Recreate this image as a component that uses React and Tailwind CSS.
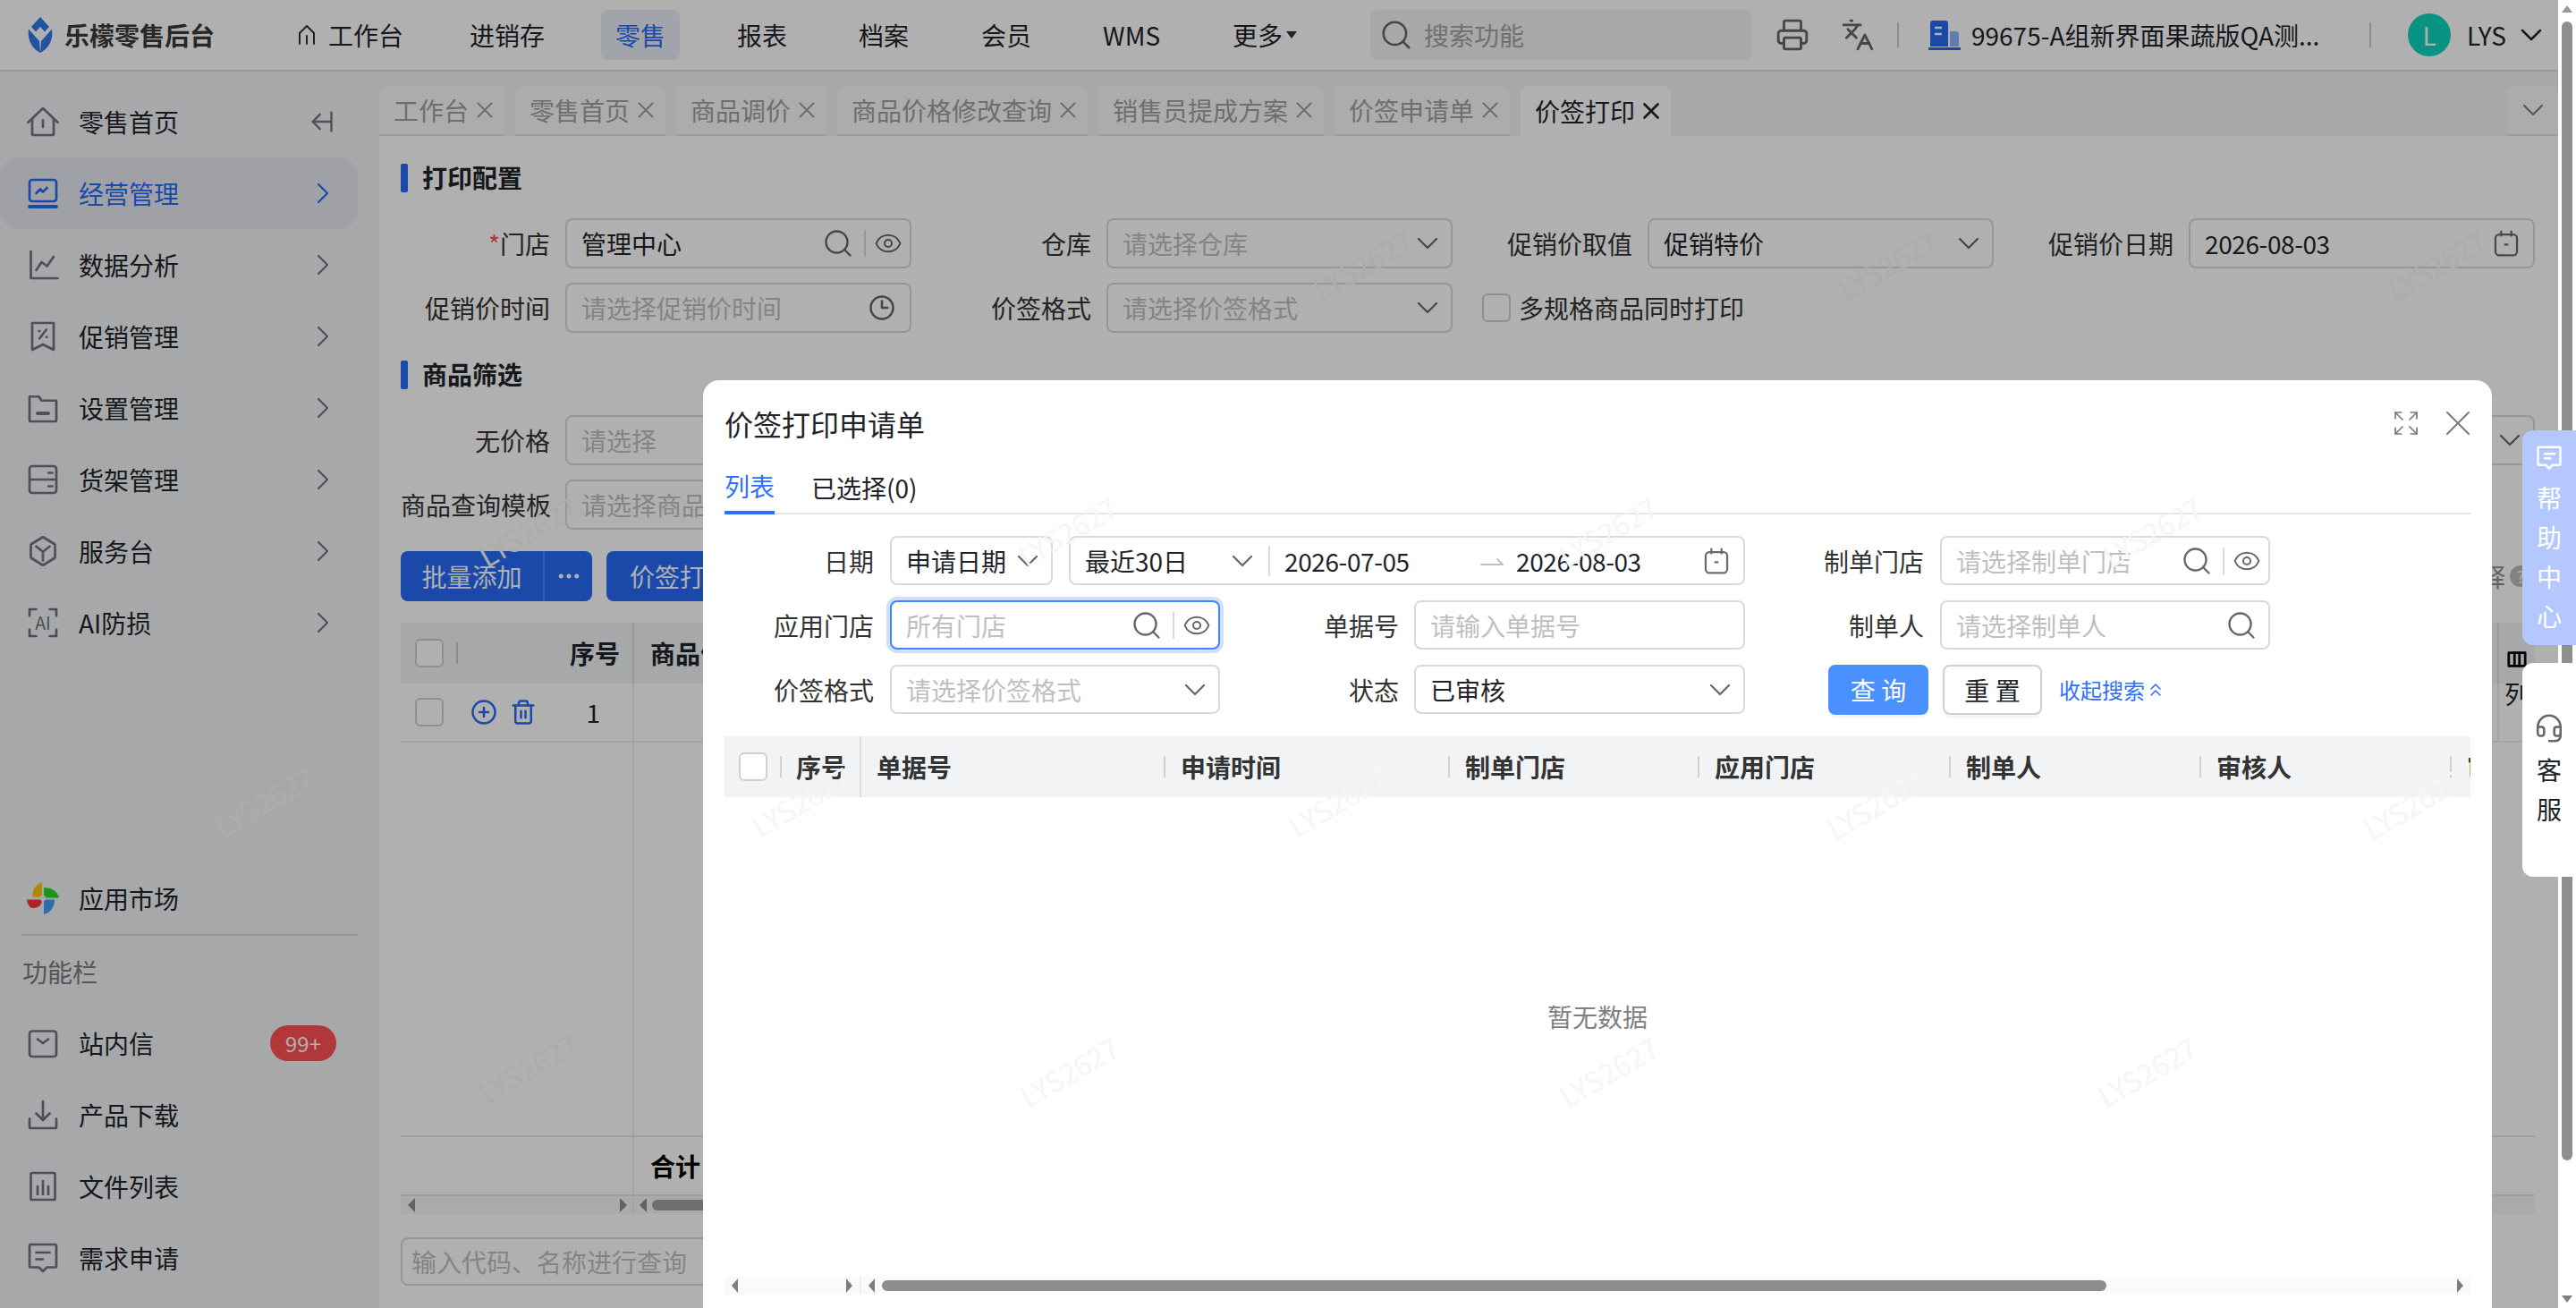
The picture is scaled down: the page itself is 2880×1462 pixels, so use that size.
import React from 'react';
import { Search, Eye, ChevronDown, ChevronRight, ChevronsUp, Printer, Languages, X, Expand, CirclePlus, Trash2, Headset, Ellipsis } from 'lucide-react';

const Svg = ({ className, sw = 2, children, box = '0 0 24 24' }) => (
    <svg viewBox={box} fill="none" stroke="currentColor" strokeWidth={sw} strokeLinecap="round" strokeLinejoin="round" className={className}>
        {children}
    </svg>
);

const Calendar = () => (
    <Svg className="w-[34px] h-[34px] text-[#6b6b6b]" sw={1.6}>
        <rect x="3.500" y="5" width="17" height="16.500" rx="3" />
        <path d="M8 2.500V6M16 2.500V6M11 13h2" />
    </Svg>
);

const menuIcons = {
    home: <><path d="M1 12.5 12 2l11 10.5" /><path d="M4 10v11a1 1 0 0 0 1 1h14a1 1 0 0 0 1-1V10" /><path d="M12 11v5" /></>,
    board: <><rect x="2" y="2" width="20" height="16" rx="2" /><path d="M7 12l3-3 2 2 3-3" /><path d="M2 22h20" strokeWidth="2.6" /></>,
    chart: <><path d="M3 2v20h20" /><path d="M7 16l4-6 4 3 5-7" /></>,
    promo: <><path d="M4 2h16v20l-8-4-8 4z" /><path d="M9.5 13.5 14.5 7M9 8h.5M14.5 12.5h.5" /></>,
    folder: <><path d="M2 3.5h7l2 3h11V21a1 1 0 0 1-1 1H3a1 1 0 0 1-1-1z" /><path d="M8 16h8" strokeWidth="2.6" /></>,
    shelf: <><rect x="2" y="2" width="20" height="20" rx="2" /><path d="M2 12h20M16 7h3M16 17h3" /></>,
    desk: <><path d="M12 1.5 21 7v10l-9 5.5L3 17V7z" /><path d="m7 8.5 5 4 5-4M12 12.5V19" /></>,
    ai: <><path d="M7 2H2v5M17 2h5v5M7 22H2v-5M17 22h5v-5" /><text x="12" y="17" textAnchor="middle" fontSize="13" stroke="none" fill="currentColor">AI</text></>,
    mail: <><rect x="2" y="3" width="20" height="19" rx="2" /><path d="m8 9 4 3 4-3" /></>,
    down: <><path d="M12 2v14M7 11l5 5 5-5" /><path d="M2 15v6a1 1 0 0 0 1 1h18a1 1 0 0 0 1-1v-6" /></>,
    file: <><rect x="3" y="2" width="18" height="20" rx="1" /><path d="M8 12v6M12 8v10M16 12v6" /></>,
    note: <><path d="M2 3a1 1 0 0 1 1-1h18a1 1 0 0 1 1 1v15a1 1 0 0 1-1 1h-6l-3 3-3-3H3a1 1 0 0 1-1-1z" /><path d="M7 8h10M7 13h5" /></>,
};

const Pinwheel = () => (
    <svg viewBox="0 0 34 34" className="w-[36px] h-[36px]">
        <path d="M16 0C10 2 6 7 6 15.500h10z" fill="#ffc400" />
        <path d="M18 6C25 5 33 10 34 16.500H18z" fill="#26d926" />
        <path d="M0 18.500h16C16 27 8 28 4 27 2 25 0 22 0 18.500z" fill="#ff3535" />
        <path d="M18 18.500h11C30 26 25 32 18 34z" fill="#3da0ff" />
        <circle cx="17" cy="17" r="3" fill="#f2f3f5" />
    </svg>
);

const MenuItem = ({ icon, label, active, arrow = true, extra }) => (
    <div className={`flex items-center w-[400px] h-[80px] pl-[30px] pr-[30px] rounded-[22px] ${active ? 'bg-[#e6e9f2] text-[#266bf6]' : 'text-[#1f2329]'}`}>
        <span className={active ? 'text-[#266bf6]' : 'text-[#71747f]'}>
            {icon === 'app' ? <Pinwheel /> : <Svg className="w-[36px] h-[36px]" sw={1.8}>{menuIcons[icon]}</Svg>}
        </span>
        <span className="ml-[22px] text-[28px]">{label}</span>
        {extra}
        {arrow && <ChevronRight className={`ml-auto w-[40px] h-[40px] -mr-[11px] ${active ? 'text-[#266bf6]' : 'text-[#71747f]'}`} strokeWidth={1.3} />}
    </div>
);

const Sidebar = () => (
    <div className="flex flex-col w-[424px] h-full bg-[#f2f3f5] pt-[16px] pb-[16px]">
        <MenuItem
            icon="home"
            label="零售首页"
            arrow={false}
            extra={
                <Svg className="ml-auto -mr-[4px] w-[28px] h-[28px] text-[#71747f]" sw={2}>
                    <path d="M21 3v18M20 12H3M10 5l-7 7 7 7" />
                </Svg>
            }
        />
        <MenuItem icon="board" label="经营管理" active />
        <MenuItem icon="chart" label="数据分析" />
        <MenuItem icon="promo" label="促销管理" />
        <MenuItem icon="folder" label="设置管理" />
        <MenuItem icon="shelf" label="货架管理" />
        <MenuItem icon="desk" label="服务台" />
        <MenuItem icon="ai" label="AI防损" />

        <div className="mt-auto">
            <MenuItem icon="app" label="应用市场" arrow={false} />
        </div>
        <div className="ml-[24px] w-[376px] h-[2px] bg-[#dcdde0]" />
        <div className="flex items-center h-[80px] pl-[25px] text-[28px] text-[#7c7c7c]">功能栏</div>
        <MenuItem
            icon="mail"
            label="站内信"
            arrow={false}
            extra={<span className="ml-auto -mr-[6px] flex items-center justify-center w-[74px] h-[40px] rounded-full bg-[#ff5151] text-white text-[24px]">99+</span>}
        />
        <MenuItem icon="down" label="产品下载" arrow={false} />
        <MenuItem icon="file" label="文件列表" arrow={false} />
        <MenuItem icon="note" label="需求申请" arrow={false} />
    </div>
);

const Header = () => (
    <div className="flex items-center h-[80px] border-b-2 border-[#dedede] bg-white text-[28px] text-[#1f2329]">
        <svg viewBox="0 0 30 40" className="ml-[30px] w-[30px] h-[40px]" fill="#2f7aea">
            <path d="M15 0 25 11l-5 5.500-5-5.500-5 5.500L5 11z" />
            <path d="M2 13.500 14 27l1 13C7 36 0 27 2 13.500z" />
            <path d="M28 13.500 16 27l-1 13c8-4 15-13 13-26.500z" />
        </svg>
        <span className="ml-[12px] w-[168px] font-bold whitespace-nowrap text-[#3a3a3a]">乐檬零售后台</span>
        <div className="flex items-center ml-[91px]">
            <Svg className="w-[24px] h-[24px] text-[#333]" sw={2}>
                <path d="M4 22V10l8-8 8 8v12M12 13v9" />
            </Svg>
            <span className="ml-[12px] mr-[74px]">工作台</span>
            <span className="mr-[63px]">进销存</span>
            <span className="flex items-center justify-center w-[88px] h-[56px] rounded-[8px] bg-[#ebeefa] text-[#266bf6] mr-[64px]">零售</span>
            <span className="mr-[80px]">报表</span>
            <span className="mr-[81px]">档案</span>
            <span className="mr-[80px]">会员</span>
            <span className="mr-[81px]">WMS</span>
            <span>更多</span>
            <span className="ml-[4px] w-0 h-0 border-x-[6px] border-x-transparent border-t-[8px] border-t-[#333]" />
        </div>
        <div className="ml-auto flex items-center pr-[10px]">
            <div className="flex items-center w-[427px] h-[56px] rounded-[8px] bg-[#f2f3f5] pl-[10px]">
                <Search className="w-[38px] h-[38px] text-[#666]" strokeWidth={1.6} />
                <span className="ml-[12px] text-[#a3a3a3]">搜索功能</span>
            </div>
            <Printer className="ml-[26px] w-[38px] h-[38px] text-[#666]" strokeWidth={1.8} />
            <Languages className="ml-[35px] w-[38px] h-[38px] text-[#666]" strokeWidth={1.8} />
            <div className="ml-[25px] w-[2px] h-[28px] bg-[#cfcfcf]" />
            <svg viewBox="0 0 36 36" className="ml-[33px] w-[36px] h-[36px]">
                <path d="M2 5a3 3 0 0 1 3-3h14a3 3 0 0 1 3 3v26H2z" fill="#266bf6" />
                <path d="M24 14h7a3 3 0 0 1 3 3v14H24z" fill="#8fb2ff" />
                <path d="M0 32h36v3H0z" fill="#266bf6" />
                <path d="M7 10h8M7 17h8" stroke="#fff" strokeWidth="2.400" />
            </svg>
            <span className="ml-[12px] w-[390px] whitespace-nowrap">99675-A组新界面果蔬版QA测...</span>
            <div className="ml-[55px] w-[2px] h-[28px] bg-[#cfcfcf]" />
            <div className="ml-[41px] flex items-center justify-center w-[48px] h-[48px] rounded-full bg-[#0ed6bd] text-white text-[28px]">L</div>
            <span className="ml-[18px] w-[42px]">LYS</span>
            <ChevronDown className="ml-[10px] w-[40px] h-[40px] text-[#1f2329]" strokeWidth={1.5} />
        </div>
    </div>
);

const tabs = ['工作台', '零售首页', '商品调价', '商品价格修改查询', '销售员提成方案', '价签申请单'];

const TabStrip = () => (
    <div className="flex items-end gap-[12px] h-[72px] bg-[#f2f3f5] text-[28px]">
        {tabs.map((t, i) => (
            <div key={i} className="flex items-center h-[56px] pl-[16px] pr-[15px] rounded-t-[8px] bg-[#fafafa] border-b-2 border-[#e2e2e2] text-[#a0a0a0]">
                <span className="whitespace-nowrap">{t}</span>
                <X className="ml-[3px] w-[30px] h-[30px] -mr-[8px]" strokeWidth={1.7} />
            </div>
        ))}
        <div className="flex items-center h-[56px] pl-[16px] pr-[15px] rounded-t-[8px] bg-white text-[#1f2329]">
            <span className="whitespace-nowrap">价签打印</span>
            <X className="ml-[3px] w-[30px] h-[30px] -mr-[8px]" strokeWidth={2.2} />
        </div>
        <div className="ml-auto flex items-center justify-center w-[57px] h-[56px] rounded-t-[8px] bg-[#fafafa] border-b-2 border-[#e2e2e2] text-[#808080]">
            <ChevronDown className="w-[40px] h-[40px]" strokeWidth={1.3} />
        </div>
    </div>
);

const SectionTitle = ({ children, className }) => (
    <div className={`flex items-center h-[32px] ${className}`}>
        <span className="w-[8px] h-[32px] rounded-[2px] bg-[#266bf6]" />
        <span className="ml-[16px] -mt-[2px] text-[28px] font-bold text-[#1f2329]">{children}</span>
    </div>
);

const Input = ({ className = '', placeholder, value, focused, children }) => (
    <div className={`flex items-center rounded-[8px] border-2 bg-white text-[28px] pl-[16px] ${focused ? 'border-[#3f86ff] ring-4 ring-[#cfdfff]' : 'border-[#d9d9d9]'} ${className}`}>
        <span className={`flex-1 whitespace-nowrap overflow-hidden ${value ? 'text-[#1f2329]' : 'text-[#bfbfbf]'}`}>{value || placeholder}</span>
        {children}
    </div>
);

const Caret = () => <ChevronDown className="mr-[6px] w-[40px] h-[40px] text-[#666]" strokeWidth={1.3} />;

const SearchEye = () => (
    <>
        <Search className="-mr-[3px] w-[36px] h-[36px] text-[#666]" strokeWidth={1.6} />
        <span className="ml-[14px] w-[2px] h-[30px] bg-[#d9d9d9]" />
        <Eye className="ml-[9px] mr-[8px] w-[32px] h-[32px] text-[#666]" strokeWidth={1.5} />
    </>
);

const PageField = ({ label, star, children }) => (
    <div className="flex items-center gap-[17px] h-[56px] text-[28px] text-[#333]">
        <span className="w-[167px] text-right whitespace-nowrap">
            {star && <span className="text-[#ff4d4f]">*</span>}
            {label}
        </span>
        {children}
    </div>
);

const Checkbox = () => <span className="block w-[32px] h-[32px] rounded-[6px] border-2 border-[#d0d0d0] bg-white shrink-0" />;

const Content = () => (
    <div className="flex-1 min-h-0 bg-white pl-[24px] pr-[26px]">
        <SectionTitle className="mt-[31px]">打印配置</SectionTitle>
        <div className="grid grid-cols-4 gap-x-[34px] gap-y-[16px] w-[2386px] mt-[29px]">
            <PageField label="门店" star>
                <Input className="flex-1 h-[56px]" value="管理中心"><SearchEye /></Input>
            </PageField>
            <PageField label="仓库">
                <Input className="flex-1 h-[56px]" placeholder="请选择仓库"><Caret /></Input>
            </PageField>
            <PageField label="促销价取值">
                <Input className="flex-1 h-[56px]" value="促销特价"><Caret /></Input>
            </PageField>
            <PageField label="促销价日期">
                <Input className="flex-1 h-[56px] tracking-[-0.4px]" value="2026-08-03"><span className="mr-[13px]"><Calendar /></span></Input>
            </PageField>
            <PageField label="促销价时间">
                <Input className="flex-1 h-[56px]" placeholder="请选择促销价时间">
                    <Svg className="mr-[16px] w-[30px] h-[30px] text-[#666]"><circle cx="12" cy="12" r="10" /><path d="M12 6v6h5" /></Svg>
                </Input>
            </PageField>
            <PageField label="价签格式">
                <Input className="flex-1 h-[56px]" placeholder="请选择价签格式"><Caret /></Input>
            </PageField>
            <div className="flex items-center h-[56px] text-[28px] text-[#333] col-span-2 -ml-[1px]">
                <Checkbox />
                <span className="ml-[9px]">多规格商品同时打印</span>
            </div>
        </div>
        <SectionTitle className="mt-[31px]">商品筛选</SectionTitle>
        <div className="grid grid-cols-4 gap-x-[34px] gap-y-[16px] w-[2386px] mt-[29px]">
            <PageField label="无价格">
                <Input className="flex-1 h-[56px]" placeholder="请选择"><Caret /></Input>
            </PageField>
            <div className="col-span-2" />
            <PageField label="商品类别">
                <Input className="flex-1 h-[56px]" placeholder="请选择"><Caret /></Input>
            </PageField>
            <PageField label="商品查询模板">
                <Input className="flex-1 h-[56px]" placeholder="请选择商品查询模板"><Caret /></Input>
            </PageField>
        </div>
        <div className="flex items-center h-[56px] mt-[24px] text-[28px] text-white">
            <div className="flex items-center h-[56px] rounded-[8px] bg-[#266bf6]">
                <span className="w-[159px] text-center">批量添加</span>
                <span className="w-[2px] h-[56px] bg-[#4a84f7]" />
                <span className="flex items-center justify-center w-[53px]"><Ellipsis className="w-[30px] h-[30px]" strokeWidth={2} /></span>
            </div>
            <div className="flex items-center h-[56px] ml-[16px] pl-[26px] pr-[26px] rounded-[8px] bg-[#266bf6]">价签打印</div>
            <span className="ml-auto text-[#8c8c8c]">解释</span>
            <span className="ml-[5px] mr-[4px] flex items-center justify-center w-[24px] h-[24px] rounded-full bg-[#bdbdbd] text-[18px] text-white">?</span>
        </div>
        <div className="mt-[24px] flex flex-col h-[661px] text-[28px] text-[#1f2329]">
            <div className="flex h-[68px] bg-[#f2f3f5] font-bold">
                <div className="flex items-center w-[261px] border-r-2 border-[#dcdcdc]">
                    <span className="ml-[16px]"><Checkbox /></span>
                    <span className="ml-[14px] w-[2px] h-[24px] bg-[#c9c9c9]" />
                    <span className="ml-auto mr-[14px]">序号</span>
                </div>
                <div className="flex-1 flex items-center pl-[18px]">商品信息</div>
                <div className="flex items-center justify-center w-[42px] pt-[14px] border-l-2 border-[#dcdcdc]">
                    <Svg className="w-[22px] h-[22px] text-black" sw={3}><rect x="2" y="4" width="20" height="16" /><path d="M9 4v16M15 4v16" /></Svg>
                </div>
            </div>
            <div className="flex h-[66px] border-b-2 border-[#eeeeee]">
                <div className="flex items-center w-[261px] border-r-2 border-[#eeeeee]">
                    <span className="ml-[16px]"><Checkbox /></span>
                    <CirclePlus className="ml-[30px] w-[30px] h-[30px] text-[#266bf6]" strokeWidth={2} />
                    <Trash2 className="ml-[14px] w-[30px] h-[30px] text-[#266bf6]" strokeWidth={2} />
                    <span className="ml-auto mr-[36px]">1</span>
                </div>
                <div className="flex-1" />
                <div className="w-[42px] border-l-2 border-[#eeeeee] pl-[6px] leading-[22px]">列</div>
            </div>
            <div className="flex-1 flex">
                <span className="w-[261px] border-r-2 border-[#eeeeee]" />
            </div>
            <div className="flex h-[68px] border-y-2 border-[#e6e6e6] font-bold text-black">
                <span className="w-[261px] border-r-2 border-[#eeeeee]" />
                <span className="flex items-center pl-[18px]">合计</span>
            </div>
            <div className="flex items-center h-[20px] bg-[#f7f7f7]">
                <div className="flex items-center w-[261px] h-[20px] border-r-2 border-[#eeeeee] pl-[8px] pr-[6px]">
                    <span className="w-0 h-0 border-y-[8px] border-y-transparent border-r-[8px] border-r-[#8f8f8f]" />
                    <span className="ml-auto w-0 h-0 border-y-[8px] border-y-transparent border-l-[8px] border-l-[#8f8f8f]" />
                </div>
                <span className="ml-[6px] w-0 h-0 border-y-[8px] border-y-transparent border-r-[8px] border-r-[#8f8f8f]" />
                <span className="ml-[6px] w-[1000px] h-[12px] rounded-full bg-[#a0a0a0]" />
            </div>
        </div>
        <div className="flex items-center mt-[26px] w-[700px] h-[54px] rounded-[8px] border-2 border-[#d9d9d9] pl-[10px] text-[28px] text-[#bfbfbf]">输入代码、名称进行查询</div>
    </div>
);

const DialogField = ({ label, children, className = '' }) => (
    <div className={`flex items-center h-[55px] text-[28px] text-[#333] ${className}`}>
        <span className="shrink-0 text-right whitespace-nowrap w-[167px]">{label}</span>
        {children}
    </div>
);

const DialogFieldWide = ({ label, children }) => (
    <div className="flex items-center h-[55px] text-[28px] text-[#333]">
        <span className="shrink-0 text-right whitespace-nowrap w-[183px]">{label}</span>
        {children}
    </div>
);

const columns = [
    { label: '单据号', w: 'w-[340px]' },
    { label: '申请时间', w: 'w-[318px]' },
    { label: '制单门店', w: 'w-[279px]' },
    { label: '应用门店', w: 'w-[281px]' },
    { label: '制单人', w: 'w-[280px]' },
    { label: '审核人', w: 'w-[280px]' },
    { label: '审核时间', w: 'w-[21px]' },
];

const Dialog = () => (
    <div className="absolute left-[786px] top-[425px] flex flex-col w-[2000px] h-[1060px] rounded-[18px] bg-white px-[24px] text-[#1f2329]">
        <div className="flex items-center h-[96px] shrink-0">
            <span className="text-[32px]">价签打印申请单</span>
            <Expand className="ml-auto w-[32px] h-[32px] text-[#7a7a7a]" strokeWidth={1.3} />
            <X className="ml-[18px] -mr-[10px] w-[48px] h-[48px] text-[#7a7a7a]" strokeWidth={1} />
        </div>
        <div className="flex h-[54px] shrink-0 border-b-2 border-[#e6e6e6] text-[28px]">
            <span className="flex items-center h-[54px] pb-[6px] text-[#2f6fff] border-b-4 border-[#2f6fff]">列表</span>
            <span className="flex items-center ml-[41px] h-[52px] pb-[4px]">已选择(0)</span>
        </div>

        <div className="grid grid-cols-[554px_570px_570px] gap-x-[17px] gap-y-[17px] mt-[24px] shrink-0">
            <DialogField label="日期" className="col-span-2">
                <Input className="ml-[18px] w-[182px] h-[55px]" value="申请日期"><Caret /></Input>
                <div className="flex items-center ml-[18px] w-[756px] h-[55px] rounded-[8px] border-2 border-[#d9d9d9] pl-[16px]">
                    <span className="text-[#1f2329] w-[150px]">最近30日</span>
                    <ChevronDown className="ml-[6px] w-[40px] h-[40px] text-[#666]" strokeWidth={1.3} />
                    <span className="ml-[9px] w-[2px] h-[34px] bg-[#d9d9d9]" />
                    <span className="ml-[16px] w-[219px] text-[#1f2329] tracking-[-0.4px]">2026-07-05</span>
                    <Svg className="w-[26px] h-[12px] text-[#bfbfbf]" sw={2} box="0 0 26 12"><path d="M1 10h24l-6-6" /></Svg>
                    <span className="ml-[14px] text-[#1f2329] tracking-[-0.4px]">2026-08-03</span>
                    <span className="ml-auto mr-[13px]"><Calendar /></span>
                </div>
            </DialogField>
            <DialogFieldWide label="制单门店">
                <Input className="ml-[18px] w-[369px] h-[55px]" placeholder="请选择制单门店"><SearchEye /></Input>
            </DialogFieldWide>

            <DialogField label="应用门店">
                <Input className="ml-[18px] w-[369px] h-[55px]" placeholder="所有门店" focused><SearchEye /></Input>
            </DialogField>
            <DialogFieldWide label="单据号">
                <Input className="ml-[17px] w-[370px] h-[55px]" placeholder="请输入单据号" />
            </DialogFieldWide>
            <DialogFieldWide label="制单人">
                <Input className="ml-[18px] w-[369px] h-[55px]" placeholder="请选择制单人">
                    <Search className="mr-[12px] w-[36px] h-[36px] text-[#666]" strokeWidth={1.6} />
                </Input>
            </DialogFieldWide>

            <DialogField label="价签格式">
                <Input className="ml-[18px] w-[369px] h-[55px]" placeholder="请选择价签格式"><Caret /></Input>
            </DialogField>
            <DialogFieldWide label="状态">
                <Input className="ml-[17px] w-[370px] h-[55px]" value="已审核"><Caret /></Input>
            </DialogFieldWide>
            <div className="flex items-center h-[55px] pl-[76px] text-[28px]">
                <span className="flex items-center justify-center w-[112px] h-[56px] rounded-[8px] bg-[#4b90ff] text-white shadow-[0_4px_0_rgba(0,0,0,0.03)]">查 询</span>
                <span className="flex items-center justify-center ml-[16px] w-[111px] h-[56px] rounded-[8px] border-2 border-[#d0d0d0] text-[#1f2329] shadow-[0_4px_0_rgba(0,0,0,0.03)]">重 置</span>
                <span className="flex items-center ml-[19px] text-[24px] text-[#2f6fff]">
                    收起搜索
                    <ChevronsUp className="w-[24px] h-[24px]" strokeWidth={1.6} />
                </span>
            </div>
        </div>

        <div className="flex h-[68px] mt-[25px] shrink-0 bg-[#f2f3f5] text-[28px] font-bold text-[#333] overflow-hidden">
            <div className="flex items-center w-[153px] shrink-0 border-r-2 border-[#dedede]">
                <span className="ml-[16px]"><Checkbox /></span>
                <span className="ml-[14px] w-[2px] h-[24px] bg-[#d0d0d0]" />
                <span className="ml-[16px]">序号</span>
            </div>
            {columns.map((c, i) => (
                <div key={i} className={`flex items-center shrink-0 pl-[17px] whitespace-nowrap overflow-hidden ${c.w}`}>
                    <span className="flex-1">{c.label}</span>
                    {i < 6 && <span className="w-[2px] h-[24px] bg-[#d0d0d0]" />}
                </div>
            ))}
        </div>

        <div className="flex items-center justify-center w-full h-[536px] shrink-0 text-[28px] text-[#808080]">
            <span className="-mt-[46px]">暂无数据</span>
        </div>

        <div className="flex items-center h-[20px] shrink-0 bg-[#fafafa]">
            <div className="flex items-center w-[153px] h-[20px] border-r-2 border-[#eeeeee] pl-[8px] pr-[8px]">
                <span className="w-0 h-0 border-y-[8px] border-y-transparent border-r-[7px] border-r-[#7d7d7d]" />
                <span className="ml-auto w-0 h-0 border-y-[8px] border-y-transparent border-l-[7px] border-l-[#7d7d7d]" />
            </div>
            <span className="ml-[8px] w-0 h-0 border-y-[8px] border-y-transparent border-r-[7px] border-r-[#7d7d7d]" />
            <span className="ml-[8px] w-[1369px] h-[12px] rounded-full bg-[#8c8c8c]" />
            <span className="ml-auto mr-[8px] w-0 h-0 border-y-[8px] border-y-transparent border-l-[7px] border-l-[#7d7d7d]" />
        </div>
    </div>
);

const Watermarks = ({ items, color }) => (
    <>
        {items.map(([x, y], i) => (
            <span
                key={i}
                className={`absolute -translate-x-1/2 -translate-y-1/2 -rotate-[30deg] text-[32px] whitespace-nowrap pointer-events-none ${color}`}
                style={{ left: x, top: y }}
            >
                LYS2627
            </span>
        ))}
    </>
);

const backMarks = [[1523, 295], [2110, 295], [2724, 295], [590, 593], [590, 1193], [295, 895]];
const dialogMarks = [
    [1193, 593], [1797, 593], [2406, 593],
    [895, 895], [1495, 895], [2097, 898], [2697, 898],
    [1195, 1197], [1798, 1197], [2400, 1197],
];

const SideScroll = () => (
    <div className="relative flex flex-col items-center w-[20px] h-full bg-white">
        <span className="mt-[6px] w-0 h-0 border-x-[6px] border-x-transparent border-b-[8px] border-b-[#9a9a9a]" />
        <span className="mt-[10px] w-[12px] h-[1273px] rounded-full bg-[#8f8f8f]" />
        <span className="mt-auto mb-[6px] w-0 h-0 border-x-[6px] border-x-transparent border-t-[8px] border-t-[#808080]" />
    </div>
);

const App = () => (
    <div className="relative flex w-[2880px] h-[1462px] overflow-hidden bg-white font-['Noto_Sans_CJK_SC','Liberation_Sans',sans-serif]">
        <div className="relative flex flex-col w-[2860px] h-full">
            <Header />
            <div className="flex flex-1 min-h-0">
                <Sidebar />
                <div className="flex flex-col flex-1 min-w-0">
                    <TabStrip />
                    <Content />
                </div>
            </div>
            <Watermarks items={backMarks} color="text-[#f9f9f9]" />
            {/* modal mask */}
            <div className="absolute inset-0 bg-black/[0.31]" />
        </div>
        <SideScroll />
        <Dialog />
        <Watermarks items={dialogMarks} color="text-[#f6f6f6]" />

        <div className="absolute right-0 top-[481px] flex flex-col items-center w-[60px] h-[240px] rounded-l-[12px] bg-[#b4c7ff] text-white text-[28px] leading-[44px] pt-[15px]">
            <Svg className="w-[30px] h-[30px] mb-[8px]" sw={2}>
                <path d="M2 4a1 1 0 0 1 1-1h18a1 1 0 0 1 1 1v14a1 1 0 0 1-1 1h-6l-3 3-3-3H3a1 1 0 0 1-1-1z" /><path d="M8 9h9M8 13h5" />
            </Svg>
            <span>帮</span>
            <span>助</span>
            <span>中</span>
            <span>心</span>
        </div>
        <div className="absolute right-0 top-[741px] flex flex-col items-center w-[60px] h-[239px] rounded-l-[12px] bg-white text-[#1f2329] text-[28px] leading-[44px] pt-[55px]">
            <Headset className="w-[34px] h-[36px] mb-[6px] text-[#666]" strokeWidth={1.8} />
            <span>客</span>
            <span>服</span>
        </div>
    </div>
);

export default App;
